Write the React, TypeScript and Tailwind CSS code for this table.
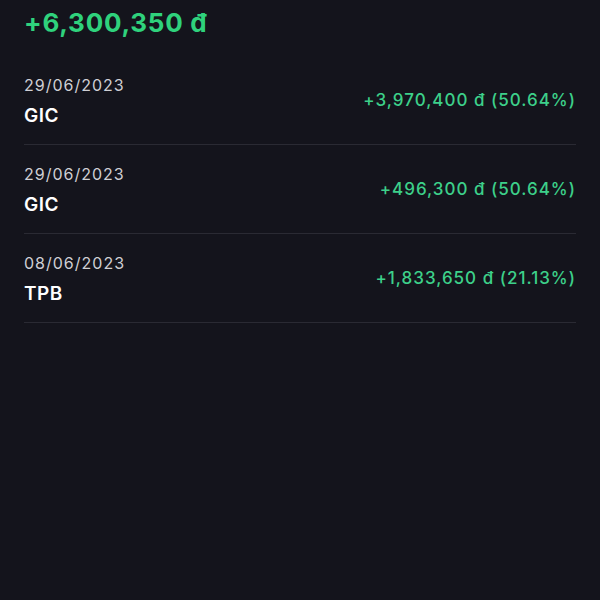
const rows = [
  { date: "29/06/2023", code: "GIC", amount: "+3,970,400 đ (50.64%)" },
  { date: "29/06/2023", code: "GIC", amount: "+496,300 đ (50.64%)" },
  { date: "08/06/2023", code: "TPB", amount: "+1,833,650 đ (21.13%)" },
];

export default function App() {
  return (
    <div
      className="w-[600px] h-[600px] bg-[#14141c] px-6 overflow-hidden"
      style={{ fontFamily: "Inter, 'Noto Sans', sans-serif" }}
    >
      <div className="pt-[7px] h-[56px] text-[26px] leading-8 font-bold tracking-[0.75px] text-[#2fd27c]">
        +6,300,350 đ
      </div>
      {rows.map((r, i) => (
        <div
          key={i}
          className="h-[89px] border-b border-[#2a2a33] flex items-center justify-between"
        >
          <div className="flex flex-col gap-[9px] pt-[2px]">
            <span className="text-[16px] leading-5 tracking-[1px] text-[#cfcfd4]">{r.date}</span>
            <span className="text-[19px] leading-6 font-semibold tracking-[0.5px] text-white">{r.code}</span>
          </div>
          <span className="text-[17px] leading-6 font-medium tracking-[1px] text-[#3dd08a]">{r.amount}</span>
        </div>
      ))}
    </div>
  );
}
